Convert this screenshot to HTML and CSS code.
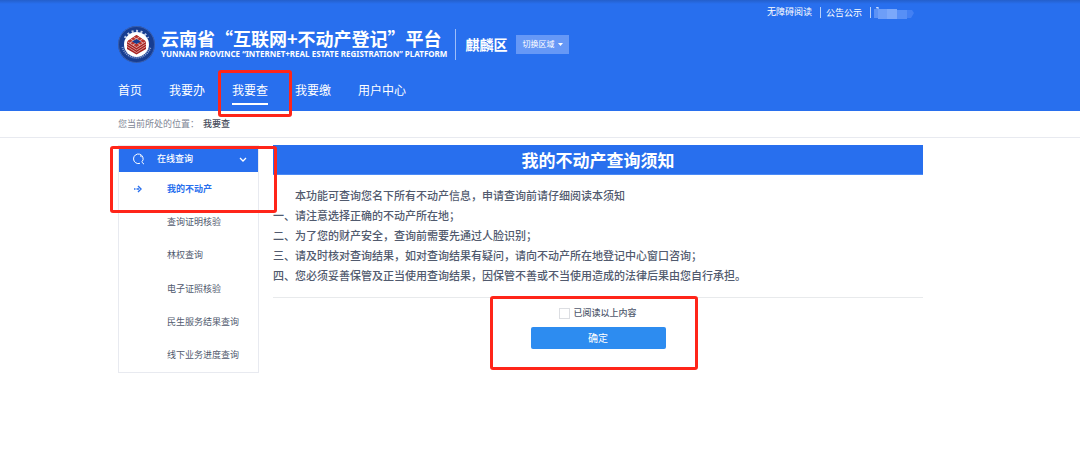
FILE: index.html
```html
<!DOCTYPE html>
<html lang="zh-CN">
<head>
<meta charset="utf-8">
<meta name="viewport" content="width=device-width, initial-scale=1">
<title>我的不动产查询须知</title>
<link rel="stylesheet" href="styles.css">
</head>
<body>
<header class="header">
  <div class="shell">
    <div class="topbar">
      <a href="#">无障碍阅读</a>
      <a href="#" class="divided">公告公示</a>
      <span class="divided account">
        <svg width="42" height="13" viewBox="0 0 42 13" aria-hidden="true">
          <path d="M1 2h10v9H1z" fill="#5c92f5"/><path d="M5 2h9v10H5z" fill="#6d9ef8"/><path d="M14 2h10v10H14z" fill="#7ba8fa"/><path d="M24 3h10v9H24z" fill="#578ff6"/><path d="M34 3h5l2 3-3 5h-4z" fill="#4380f3"/><path d="M3 1l2-1v2" fill="none" stroke="#e3edff"/>
        </svg>
      </span>
    </div>
    <div class="brand">
      <svg class="logo" viewBox="0 0 74 74" aria-hidden="true">
        <circle cx="37" cy="37" r="37" fill="#173d91"/>
        <circle cx="37" cy="37" r="36" fill="none" stroke="#5d80c8" stroke-width="1"/>
        <path d="M14 24A26 26 0 0 1 60 24" fill="none" stroke="#b9c9e8" stroke-width="5" stroke-dasharray="4 5"/>
        <path d="M9 42A29 29 0 0 0 65 42" fill="none" stroke="#8fa6d6" stroke-width="4" stroke-dasharray="2 2"/>
        <circle cx="37" cy="37" r="25" fill="#fff"/>
        <path d="M37 18 56 31v15L37 57 18 46V31z" fill="#a5201f"/>
        <path d="M37 18 56 31 37 43 18 31z" fill="#b8322c"/>
        <path d="M18 36l19 12 19-12M18 41l19 12 19-12" fill="none" stroke="#e9b9b5" stroke-width="1.500"/>
        <path d="M18 31l19 12 19-12M25 26l19 12M31 22l19 12M49 26L30 38M43 22L24 34" fill="none" stroke="#fff" stroke-width="1.200"/>
        <path d="M37 26l9 5-9 5-9-5z" fill="#173d91"/>
      </svg>
      <div class="names">
        <h1 class="name">云南省“互联网+不动产登记”平台</h1>
        <p class="name-en">YUNNAN PROVINCE “INTERNET+REAL ESTATE REGISTRATION” PLATFORM</p>
      </div>
      <strong class="district">麒麟区</strong>
      <button type="button" class="switch">切换区域<svg width="5" height="3" viewBox="0 0 5 3" aria-hidden="true"><path d="M0 0h5L2.500 3z" fill="currentColor"/></svg></button>
    </div>
    <nav class="nav">
      <a href="#">首页</a>
      <a href="#">我要办</a>
      <a href="#" class="active" aria-current="page">我要查<span class="mark mark-nav"></span></a>
      <a href="#">我要缴</a>
      <a href="#">用户中心</a>
    </nav>
  </div>
</header>
<div class="crumbs">
  <div class="shell crumb-row"><span>您当前所处的位置：</span><strong>我要查</strong></div>
</div>
<main class="shell layout">
  <aside class="side">
    <button type="button" class="side-head" aria-expanded="true">
      <svg width="12" height="12" viewBox="0 0 12 12" fill="none" stroke="currentColor" aria-hidden="true"><path d="M7 10.300A4.800 4.800 0 1 1 9.300 8.500M8.500 8.800l2.500 2.400M7 2.500a3 3 0 0 1 1.500 1.700"/></svg>
      <span>在线查询</span>
      <svg class="chevron" width="8" height="5" viewBox="0 0 8 5" fill="none" stroke="currentColor" stroke-width="1.300" aria-hidden="true"><path d="M1 1l3 3 3-3"/></svg>
    </button>
    <ul class="menu">
      <li><a href="#" class="current"><svg width="9" height="8" viewBox="0 0 9 8" fill="none" stroke="currentColor" stroke-width="1.400" aria-hidden="true"><path d="M0 4h1.500M2.500 4H5M4 1l3 3-3 3"/></svg>我的不动产</a></li>
      <li><a href="#">查询证明核验</a></li>
      <li><a href="#">林权查询</a></li>
      <li><a href="#">电子证照核验</a></li>
      <li><a href="#">民生服务结果查询</a></li>
      <li><a href="#">线下业务进度查询</a></li>
    </ul>
    <span class="mark mark-side"></span>
  </aside>
  <section class="notice">
    <h2 class="notice-title">我的不动产查询须知</h2>
    <div class="notice-text">
      <p class="intro">本功能可查询您名下所有不动产信息，申请查询前请仔细阅读本须知</p>
      <p>一、请注意选择正确的不动产所在地；</p>
      <p>二、为了您的财产安全，查询前需要先通过人脸识别；</p>
      <p>三、请及时核对查询结果，如对查询结果有疑问，请向不动产所在地登记中心窗口咨询；</p>
      <p>四、您必须妥善保管及正当使用查询结果，因保管不善或不当使用造成的法律后果由您自行承担。</p>
    </div>
    <form class="confirm">
      <label class="agree"><input type="checkbox">已阅读以上内容</label>
      <button type="button" class="submit">确定</button>
      <span class="mark mark-form"></span>
    </form>
  </section>
</main>
</body>
</html>
```
FILE: styles.css
```css
* { box-sizing: border-box; }
body {
  margin: 0;
  background: #fff;
  color: #515a6e;
  font: 9px/12px "Noto Sans CJK SC", sans-serif;
}
h1, h2, p, ul { margin: 0; padding: 0; }
ul { list-style: none; }
a { color: inherit; text-decoration: none; }
button { font: inherit; border: 0; padding: 0; cursor: pointer; }
svg { display: block; flex: none; }

.header, .crumbs { padding-right: 39px; }
.shell { max-width: 805px; margin: 0 auto; }
.header {
  background: linear-gradient(#245fcb, #286fee 4px);
  color: #fff;
}
.topbar {
  display: flex;
  justify-content: flex-end;
  align-items: center;
  gap: 8px;
  height: 24px;
  padding-right: 8px;
}
.divided {
  border-left: 1px solid #b8d0fb;
  height: 11px;
  padding-left: 5px;
}
.account { padding-left: 2px; }
.brand { display: flex; align-items: center; height: 40px; }
.logo { width: 37px; height: 37px; }
.names {
  margin-left: 6px;
  padding-right: 8px;
  border-right: 1px solid #9dbdf9;
}
.name { font-size: 18px; line-height: 19px; white-space: nowrap; }
.name-en {
  font: bold 8px/12px "Noto Sans", sans-serif;
  white-space: nowrap;
}
.district { margin: 0 9px; font-size: 14px; }
.switch {
  display: flex;
  align-items: center;
  gap: 4px;
  height: 19px;
  padding: 0 6px;
  background: #6698f6;
  color: #fff;
  font-size: 8px;
}
.nav {
  display: flex;
  gap: 27px;
  height: 47px;
  padding-top: 16px;
  font-size: 12px;
  line-height: 20px;
}
.nav a { position: relative; height: 25px; }
.nav .active { border-bottom: 2px solid #fff; }

.crumbs { border-bottom: 1px solid #e8eaf0; color: #808695; }
.crumb-row { display: flex; gap: 4px; line-height: 26px; }
.crumb-row strong { color: #464c5b; font-weight: 500; }

.layout {
  display: grid;
  grid-template-columns: 141px minmax(0, 1fr);
  gap: 14px;
  max-width: 844px;
  padding: 7px 39px 20px 0;
}
.side { position: relative; align-self: start; border: 1px solid #e8eaf0; }
.side-head {
  display: flex;
  align-items: center;
  gap: 12px;
  width: 100%;
  height: 26px;
  padding: 0 11px 0 14px;
  background: #286fee;
  color: #fff;
  font-weight: 500;
}
.chevron { margin-left: auto; }
.menu { display: grid; grid-auto-rows: 1fr; height: 200px; }
.menu a {
  display: flex;
  align-items: center;
  height: 100%;
  padding-left: 48px;
}
.menu .current { gap: 24px; padding-left: 15px; color: #286fee; font-weight: 700; }

.notice-title {
  background: #286fee;
  border-bottom: 1px solid #4b8af5;
  color: #fff;
  font-size: 17px;
  line-height: 29px;
  text-align: center;
}
.notice-text {
  padding: 10px 0 12px;
  border-bottom: 1px solid #e8eaec;
  font-size: 11px;
  font-weight: 500;
  line-height: 20px;
}
.intro { text-indent: 2em; }
.confirm {
  position: relative;
  display: flex;
  flex-direction: column;
  align-items: center;
  gap: 8px;
  padding-top: 9px;
}
.agree { display: flex; align-items: center; gap: 3px; font-weight: 500; }
.agree input {
  appearance: none;
  width: 11px;
  height: 11px;
  margin: 0;
  border: 1px solid #dcdee2;
  background: #fff;
}
.agree input:checked { background: #2d8cf0; }
.submit {
  width: 135px;
  height: 22px;
  border-radius: 2px;
  background: #2d8cf0;
  color: #fff;
  font-size: 10px;
}

.mark {
  position: absolute;
  z-index: 1;
  border: 3px solid #ff2519;
  border-radius: 3px;
  pointer-events: none;
}
.mark-nav { inset: -10px -24px -14px -14px; }
.mark-side { top: 0; left: -9px; right: -19px; height: 67px; }
.mark-form { top: -2px; left: calc(50% - 108px); width: 208px; height: 74px; }
```
